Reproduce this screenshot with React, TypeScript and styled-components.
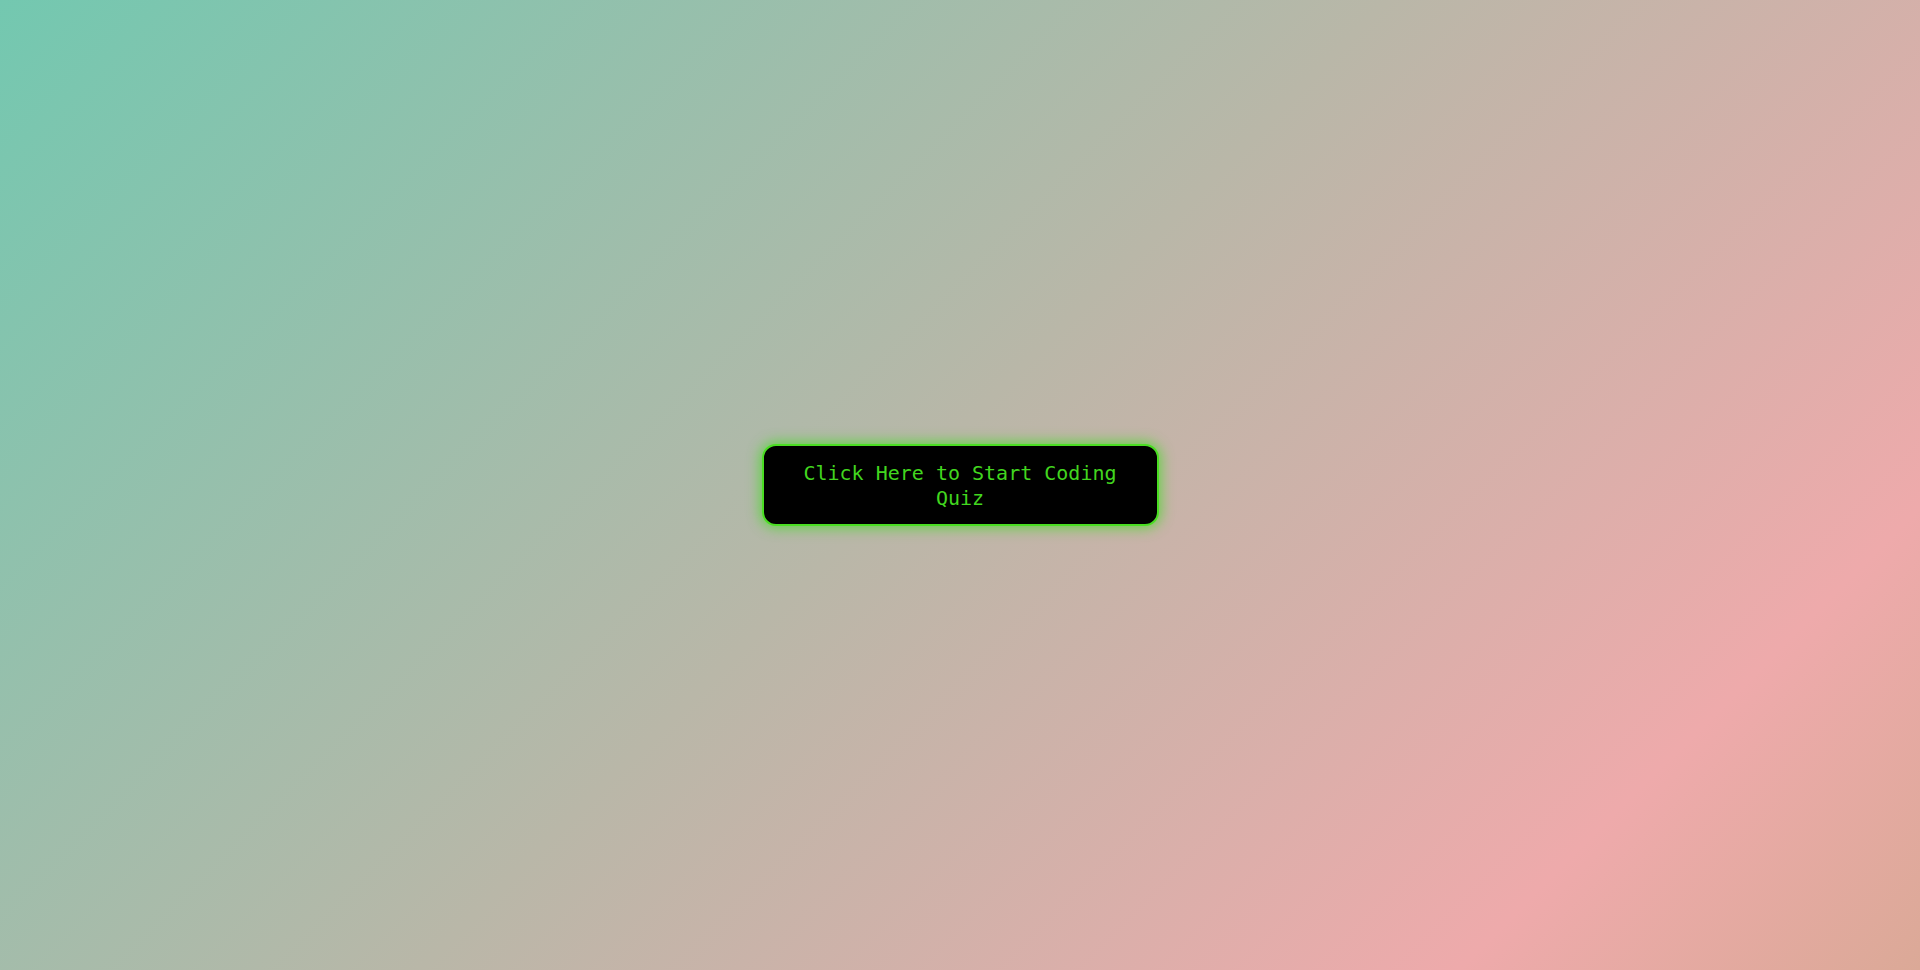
import React from "react";
import styled, { createGlobalStyle } from "styled-components";

const GlobalStyle = createGlobalStyle`
  html, body {
    margin: 0;
    padding: 0;
    height: 100%;
  }
  #root {
    height: 100%;
  }
`;

const Page = styled.main`
  box-sizing: border-box;
  min-height: 100vh;
  display: flex;
  align-items: center;
  justify-content: center;
  background: linear-gradient(
    135deg,
    #73c8b0 0%,
    #b9b7a8 48%,
    #eeaaab 84%,
    #dba997 100%
  );
`;

const StartButton = styled.button`
  box-sizing: border-box;
  width: 397px;
  padding: 15px 36px 13px;
  background: #000;
  color: #42d61f;
  border: 2px solid #4ade22;
  border-radius: 14px;
  box-shadow: 0 0 13px 2px rgba(64, 220, 30, 0.72);
  font-family: "DejaVu Sans Mono", "Liberation Mono", monospace;
  font-size: 20px;
  line-height: 25px;
  text-align: center;
  cursor: pointer;
`;

export default function App() {
  return (
    <>
      <GlobalStyle />
      <Page>
        <StartButton>Click Here to Start Coding Quiz</StartButton>
      </Page>
    </>
  );
}
